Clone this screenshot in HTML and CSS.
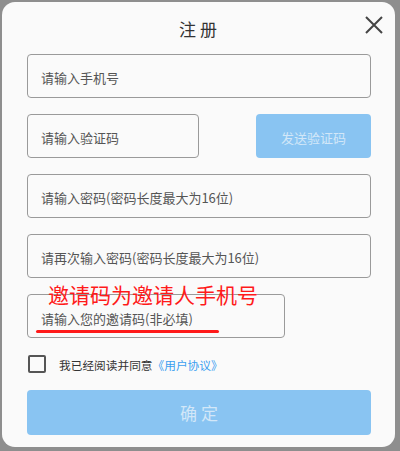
FILE: index.html
```html
<!DOCTYPE html>
<html lang="zh">
<head>
<meta charset="utf-8">
<link rel="stylesheet" href="styles.css">
</head>
<body>
<div class="card">
  <div class="header">
    <div class="title">注 册</div>
    <svg class="close" width="18" height="18" viewBox="0 0 18 18"><path d="M1 1L17 17M17 1L1 17" stroke="#444" stroke-width="2" fill="none"/></svg>
  </div>
  <div class="form">
    <div class="field">请输入手机号</div>
    <div class="row">
      <div class="field short">请输入验证码</div>
      <div class="send">发送验证码</div>
    </div>
    <div class="field">请输入密码(密码长度最大为16位)</div>
    <div class="field">请再次输入密码(密码长度最大为16位)</div>
    <div class="invite-wrap">
      <div class="field invite">请输入您的邀请码(非必填)</div>
      <div class="note">邀请码为邀请人手机号</div>
      <div class="underline"></div>
    </div>
    <div class="agree">
      <span class="box"></span>
      <span class="agree-text">我已经阅读并同意<span class="link">《用户协议》</span></span>
    </div>
    <div class="submit">确 定</div>
  </div>
</div>
</body>
</html>
```
FILE: styles.css
```css
html, body {
  margin: 0;
  padding: 0;
}
body {
  background: #8e8e8e;
  width: 400px;
  height: 451px;
  overflow: hidden;
  font-family: "Noto Sans CJK SC", "Noto Sans", sans-serif;
}
.card {
  position: relative;
  margin: 2px 0 0 2px;
  width: 393px;
  height: 445px;
  box-sizing: border-box;
  background: #fafafa;
  border-radius: 13px;
  padding: 0 24px 0 25px;
}
.header {
  height: 52px;
  display: flex;
  justify-content: center;
  align-items: center;
}
.title {
  font-size: 17px;
  color: #333;
  padding-right: 2px;
  white-space: pre;
}
.close {
  position: absolute;
  right: 12px;
  top: 14px;
}
.form {
  display: flex;
  flex-direction: column;
  gap: 16px;
}
.field {
  height: 44px;
  box-sizing: border-box;
  border: 1px solid #9a9a9a;
  border-radius: 4px;
  display: flex;
  align-items: center;
  padding: 3px 0 0 13px;
  font-size: 13px;
  color: #555;
}
.row {
  display: flex;
  justify-content: space-between;
}
.short {
  width: 172px;
}
.send {
  width: 115px;
  height: 44px;
  border-radius: 4px;
  background: #89c4f2;
  color: #d2e7f8;
  font-size: 13px;
  display: flex;
  align-items: center;
  justify-content: center;
  padding-top: 2px;
  box-sizing: border-box;
}
.invite-wrap {
  position: relative;
  width: 258px;
}
.invite {
  padding-top: 4px;
}
.note {
  position: absolute;
  left: 21px;
  top: -14px;
  font-size: 21px;
  line-height: 28px;
  color: #ff1a1a;
  white-space: nowrap;
}
.underline {
  position: absolute;
  left: 9px;
  top: 36px;
  width: 183px;
  height: 2.5px;
  border-radius: 2px;
  background: #ff1a1a;
}
.agree {
  display: flex;
  align-items: center;
  margin-top: 1px;
  height: 18px;
}
.box {
  width: 18px;
  height: 18px;
  box-sizing: border-box;
  border: 2px solid #555;
  border-radius: 2px;
  margin-left: 1px;
}
.agree-text {
  margin-left: 13px;
  font-size: 11.7px;
  color: #333;
}
.link {
  color: #3a9ff0;
}
.submit {
  margin-top: 1px;
  height: 45px;
  border-radius: 4px;
  background: #89c4f2;
  color: #d2e7f8;
  font-size: 17px;
  display: flex;
  align-items: center;
  justify-content: center;
  white-space: pre;
}
```
